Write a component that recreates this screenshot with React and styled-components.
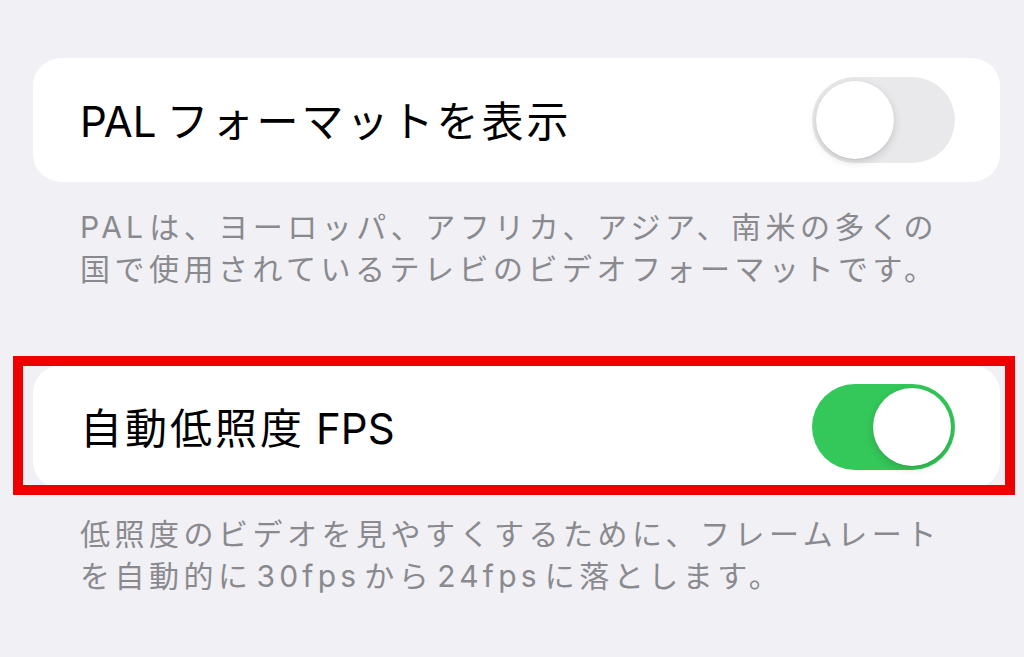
import React from 'react';
import styled, { createGlobalStyle } from 'styled-components';

const GlobalStyle = createGlobalStyle`
    html, body {
        margin: 0;
        background: #f0f0f5;
    }
    body {
        font-family: "Inter", "Noto Sans CJK JP", sans-serif;
    }
`;

const Page = styled.div`
    width: 1024px;
    height: 657px;
    box-sizing: border-box;
    padding: 58px 24px 0 33px;
    overflow: hidden;
`;

const Group = styled.section`
    margin-bottom: ${p => p.gap || 0}px;
`;

const Card = styled.div`
    position: relative;
    height: 124px;
    background: #ffffff;
    border-radius: 28px;
    display: flex;
    align-items: center;
    justify-content: space-between;
    padding: 0 45px 0 47px;
`;

const Title = styled.span`
    font-size: 42px;
    letter-spacing: 3px;
    color: #000;
    margin-top: -4px;
`;

const Note = styled.p`
    margin: 24px 0 0 0;
    padding-left: 47px;
    font-size: 30px;
    line-height: 42px;
    letter-spacing: 4.5px;
    color: #8a8a8e;
    white-space: nowrap;
`;

// Latin runs get their own tracking and a little air next to kana
const Latin = styled.span`
    letter-spacing: ${p => p.track || 0}px;
    margin: 0 ${p => p.after || 0}px 0 ${p => p.before || 0}px;
`;

const Track = styled.div`
    position: relative;
    width: 143px;
    height: 86px;
    border-radius: 43px;
    background: ${p => (p.on ? '#34c759' : '#e9e9eb')};
    flex-shrink: 0;
`;

const Knob = styled.div`
    position: absolute;
    top: 4px;
    left: ${p => (p.on ? '61px' : '4px')};
    width: 78px;
    height: 78px;
    border-radius: 50%;
    background: #fff;
    box-shadow: 0 3px 8px rgba(0, 0, 0, 0.15), 0 1px 1px rgba(0, 0, 0, 0.06);
`;

const Highlight = styled.div`
    position: absolute;
    top: -9px;
    left: -20px;
    right: -15px;
    bottom: -6px;
    border: 10px solid #ee0000;
    pointer-events: none;
`;

const Toggle = ({ on }) => (
    <Track on={on}>
        <Knob on={on} />
    </Track>
);

const App = () => {
    return (
        <Page>
            <GlobalStyle />
            <Group gap={75}>
                <Card>
                    <Title>
                        <Latin after={10}>PAL</Latin>フォーマットを表示
                    </Title>
                    <Toggle on={false} />
                </Card>
                <Note>
                    <Latin track={4.2} after={2}>PAL</Latin>は、ヨーロッパ、アフリカ、アジア、南米の多くの<br />
                    国で使用されているテレビのビデオフォーマットです。
                </Note>
            </Group>
            <Group>
                <Card>
                    <Title>
                        自動低照度<Latin before={11}>FPS</Latin>
                    </Title>
                    <Toggle on={true} />
                    <Highlight />
                </Card>
                <Note>
                    低照度のビデオを見やすくするために、フレームレート<br />
                    を自動的に<Latin track={4.2} before={4} after={4}>30fps</Latin>から<Latin track={4.2} before={4} after={4}>24fps</Latin>に落とします。
                </Note>
            </Group>
        </Page>
    );
};

export default App;
